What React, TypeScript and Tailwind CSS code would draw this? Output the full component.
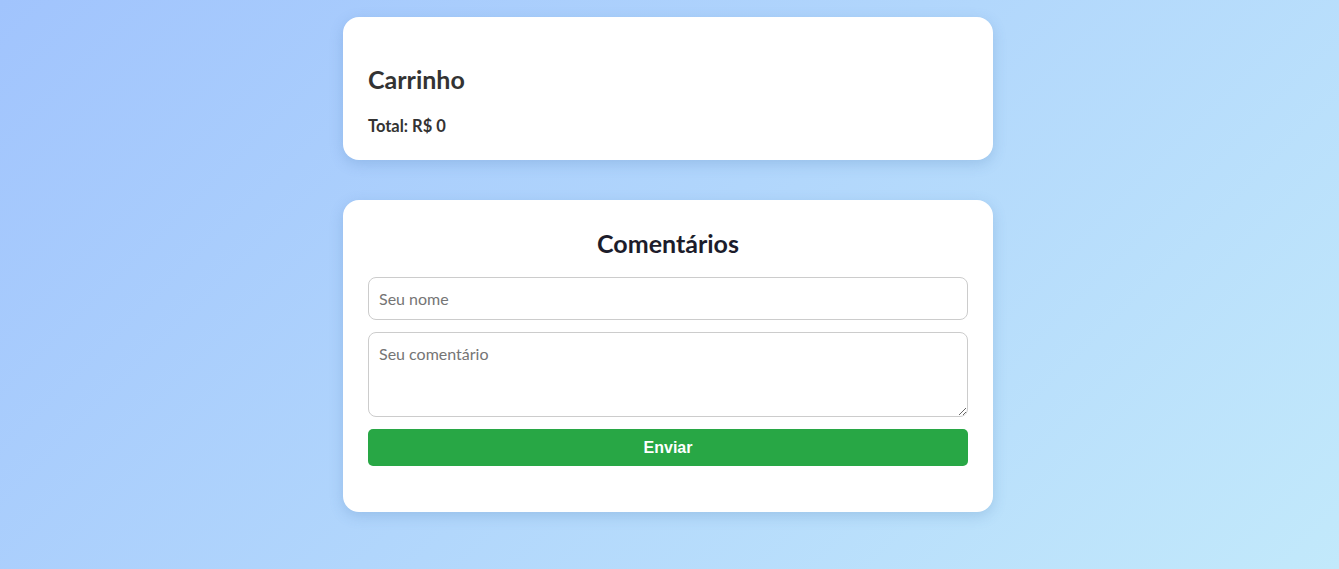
export default function App() {
  return (
    <div className="min-h-screen bg-[linear-gradient(135deg,#a1c4fd,#c2e9fb)] pt-[17px] pb-10 pr-[3px] font-['Lato','Noto_Sans',sans-serif]">
      <div className="w-[650px] mx-auto flex flex-col gap-[40px]">
        {/* Carrinho */}
        <div className="bg-white rounded-2xl px-[25px] pt-[46px] pb-[24px] shadow-[0_4px_14px_rgba(60,110,170,0.22)]">
          <h2 className="text-[25px] leading-[32px] font-bold text-[#333]">Carrinho</h2>
          <p className="mt-[21px] text-[16.5px] leading-[20px] font-bold text-[#333]">Total: R$ 0</p>
        </div>

        {/* Comentários */}
        <div className="bg-white rounded-2xl px-[25px] pt-[27px] pb-[46px] shadow-[0_4px_14px_rgba(60,110,170,0.22)]">
          <h2 className="text-[25px] leading-[32px] font-bold text-[#1c1c2b] text-center">Comentários</h2>
          <form className="mt-[18px] flex flex-col" onSubmit={(e) => e.preventDefault()}>
            <input
              type="text"
              placeholder="Seu nome"
              className="h-[43px] w-full border border-[#ccc] rounded-lg px-[10px] text-[16px] text-[#333] placeholder:text-[#757575] outline-none"
            />
            <textarea
              placeholder="Seu comentário"
              className="mt-[12px] h-[85px] w-full border border-[#ccc] rounded-lg px-[10px] py-[11px] text-[16px] leading-[20px] text-[#333] placeholder:text-[#757575] outline-none resize-y"
            />
            <button
              type="submit"
              className="mt-[12px] h-[37px] w-full bg-[#28a745] text-white rounded-[5px] font-bold text-[16px] font-['Liberation_Sans',Arial,sans-serif]"
            >
              Enviar
            </button>
          </form>
        </div>
      </div>
    </div>
  );
}
